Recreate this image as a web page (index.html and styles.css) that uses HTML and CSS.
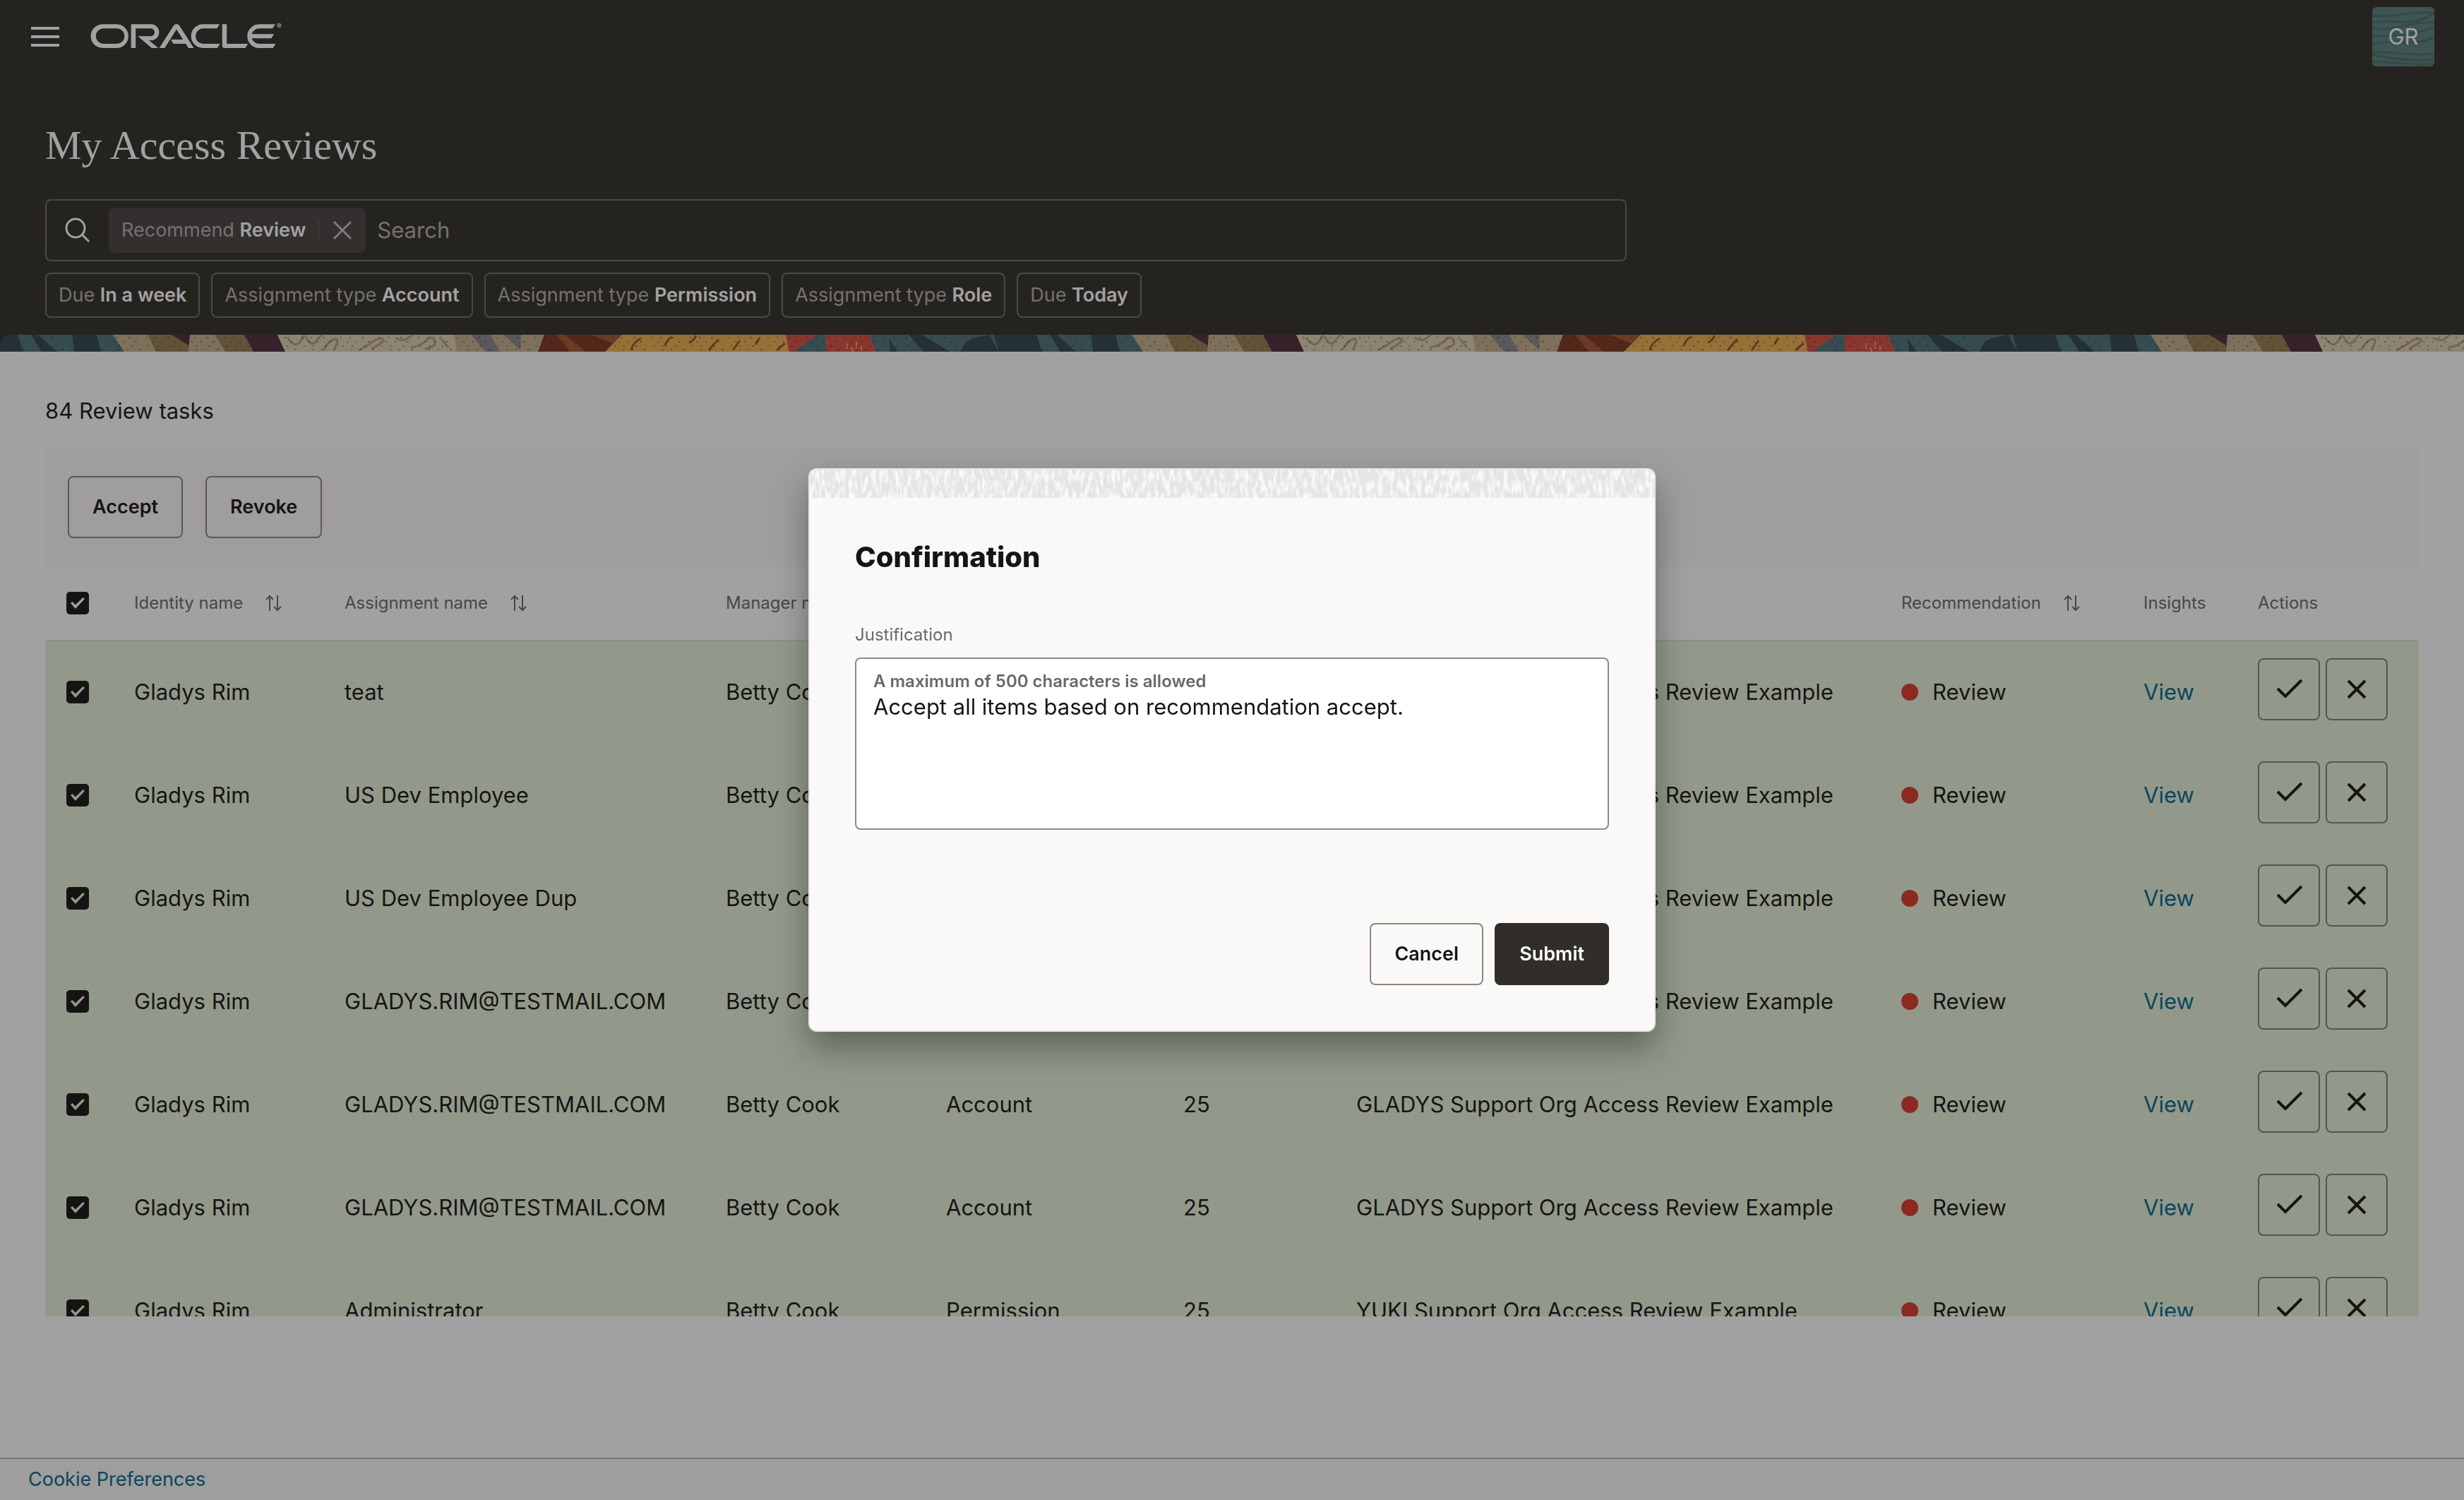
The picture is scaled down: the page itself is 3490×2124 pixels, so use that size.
FILE: index.html
```html
<!DOCTYPE html>
<html lang="en">
<head>
<meta charset="utf-8">
<title>My Access Reviews</title>
<meta name="viewport" content="width=device-width, initial-scale=1">
<link rel="stylesheet" href="styles.css">
</head>
<body>
<svg class="defs" aria-hidden="true">
  <symbol id="i-sort" viewBox="0 0 24 24"><path d="M6 23V2M1 7l5-5 5 5M17 1v21M12 17l5 5 5-5"/></symbol>
  <symbol id="i-check" viewBox="0 0 40 30"><path d="M4 14l11 11L38 2"/></symbol>
  <symbol id="i-x" viewBox="0 0 30 30"><path d="M3 3L27 27M27 3L3 27"/></symbol>
</svg>
<div class="app">
  <header class="hero">
    <div class="topbar">
      <button class="menu" aria-label="Menu"><svg width="40" height="28" viewBox="0 0 40 28"><path d="M0 0h40v4H0zM0 12h40v4H0zM0 24h40v4H0z"/></svg></button>
      <svg class="logo" width="272" height="34" viewBox="0 0 240 30" role="img" aria-label="Oracle">
        <path d="M99.610 19.520h15.240l-8.050-13L92 30h-6.730l18-28.170a4.290 4.290 0 0 1 7-.05L128.320 30h-6.730l-3.170-5.250H103l-3.360-5.230m69.930 5.230V.28h-5.720v26.880a2.760 2.760 0 0 0 .85 2 2.890 2.890 0 0 0 2.080.87h26l3.390-5.250h-26.630M75 20.380A10 10 0 0 0 75 .28H50V30h5.710V5.540h18.940a4.810 4.810 0 0 1 0 9.620H58.540L75.600 30h8.290L72.430 20.380H75M14.880 30h17.270a14.860 14.860 0 0 0 0-29.710H14.880a14.860 14.860 0 1 0 0 29.710m16.880-5.230h-16.500a9.620 9.620 0 0 1 0-19.230h16.500a9.620 9.620 0 1 1 0 19.230M140.250 30h17.630l3.340-5.230h-20.580a9.620 9.620 0 1 1 0-19.230h16.750l3.380-5.250h-20.520a14.860 14.860 0 1 0 0 29.710m69.870-5.230a9.620 9.620 0 0 1-9.260-7h24.420l3.360-5.240h-27.780a9.610 9.610 0 0 1 9.260-7h16.760l3.350-5.250h-20.500a14.860 14.860 0 0 0 0 29.710h17.630l3.350-5.230h-20.600"/>
        <text x="232" y="6" font-size="9">®</text>
      </svg>
      <button class="avatar"><svg viewBox="0 0 88 84" aria-hidden="true"><path d="M0 12c30 4 50-6 88-4M0 22c25-6 60 8 88-14M0 30c30 6 50-10 88-8M0 42c28-4 44 4 88-14M0 52c30-8 60 6 88-10M0 64c34-2 50 6 88 2M0 68c30 4 60 10 88 6M0 78c30-2 50 6 88 2"/></svg><span>GR</span></button>
    </div>
    <div class="hero-body">
      <h1>My Access Reviews</h1>
      <div class="search">
        <svg width="36" height="36" viewBox="0 0 36 36"><circle cx="15" cy="15" r="13"/><path d="M24 24l10 10"/></svg>
        <span class="token"><span>Recommend <b>Review</b></span><button aria-label="Remove filter"><svg width="30" height="30"><use href="#i-x"/></svg></button></span>
        <input type="text" placeholder="Search" aria-label="Search">
      </div>
      <div class="chips">
        <button class="chip">Due <b>In a week</b></button>
        <button class="chip">Assignment type <b>Account</b></button>
        <button class="chip">Assignment type <b>Permission</b></button>
        <button class="chip">Assignment type <b>Role</b></button>
        <button class="chip">Due <b>Today</b></button>
      </div>
    </div>
    <svg class="banner" aria-hidden="true">
      <defs>
        <pattern id="art" width="1443" height="24" patternUnits="userSpaceOnUse">
          <path fill="#4b727b" d="M0 0h1443v24H0z"/>
          <path fill="#2f4551" d="M0 0h25l8 24H0zM44 0h10l27 24H59zM102 0h35l6 24h-38zM1408 0h35v24h-29zM1287 0h19l40 24h-38zM1259 5l12 19h-10zM1380 4l22-4 12 24h-54l8-14z"/>
          <path fill="#c4af8c" d="M160 0h240l20 24H176zM641 0h130l-8 24H647z"/>
          <path fill="#957c51" d="M209 0h60v24h-48zM304 0h42l14 24h-41z"/>
          <path fill="#4e2b39" d="M243 0h27l-1 16zM346 0h47l11 24h-45z"/>
          <path fill="#c4af8c" d="M269 0h35l15 24h-52z"/>
          <path fill="#ddd1b2" d="M393 0h250l4 24H404z"/>
          <path fill="#89858b" d="M667 0h28l13 24h-20zM714 0h24l-1 22z"/>
          <path fill="#7b3620" d="M771 0h110l-24 24h-95z"/>
          <path fill="#a35632" d="M788 0h12l29 24h-22zM836 0h45l-13 12z"/>
          <path fill="#eaaf50" d="M881 0h232l5 24H857z"/>
          <path fill="#d64e41" d="M1113 0h45l-33 24h-7zM1170 0h61l10 24h-71z"/>
          <g fill="none" stroke-width="3">
            <path stroke="#b39c76" d="M407 4q10 14 16 8t8-12M433 2q8 16 14 8t10-10M458 22q8-14 16-16t0 14M508 22q12-6 20-12t14-4-16 14M560 4q10 6 16 2t8-6M582 18q14-2 22-10t12 0-14 12M625 6l10 12"/>
            <path stroke="#9c4f27" d="M908 5q-12 6-14 17M952 3q-8 4-10 13M986 1q-4 8-10 10M1018 6q-8 8-14 16M1048 8l-10 14M1076 4l-6 10M1112 12l-12 10"/>
            <path stroke="#eaaf50" stroke-width="2" d="M1200 12v8M1213 10v10M1220 16v6M1206 18l2 6"/>
          </g>
          <path fill="none" stroke="#161513" stroke-opacity=".35" stroke-width="2" stroke-dasharray="2 15 3 22 2 11" d="M0 4h1443M9 10h1434M3 16h1440M15 21h1428"/>
        </pattern>
      </defs>
      <rect width="100%" height="24" fill="url(#art)"/>
    </svg>
  </header>

  <main>
    <h2>84 Review tasks</h2>
    <div class="toolbar"><button class="btn">Accept</button><button class="btn">Revoke</button></div>
    <div class="scroller">
      <table>
        <colgroup><col class="c-check"><col class="c-identity"><col class="c-assignment"><col class="c-manager"><col class="c-type"><col class="c-count"><col><col class="c-rec"><col class="c-insights"><col class="c-actions"></colgroup>
        <thead>
          <tr>
            <th><input type="checkbox" checked aria-label="Select all"></th>
            <th><span class="sort">Identity name<svg><use href="#i-sort"/></svg></span></th>
            <th><span class="sort">Assignment name<svg><use href="#i-sort"/></svg></span></th>
            <th>Manager name</th><th>Type</th><th>Days</th><th>Campaign</th>
            <th><span class="sort">Recommendation<svg><use href="#i-sort"/></svg></span></th>
            <th>Insights</th><th>Actions</th>
          </tr>
        </thead>
        <tbody>
          <tr><td><input type="checkbox" checked aria-label="Select row"></td><td>Gladys Rim</td><td>teat</td><td>Betty Cook</td><td>Account</td><td>25</td><td>GLADYS Support Org Access Review Example</td><td><span class="rec">Review</span></td><td><a href="#">View</a></td><td class="acts"><div><button aria-label="Accept"><svg class="ok"><use href="#i-check"/></svg></button><button aria-label="Revoke"><svg class="no"><use href="#i-x"/></svg></button></div></td></tr>
          <tr><td><input type="checkbox" checked aria-label="Select row"></td><td>Gladys Rim</td><td>US Dev Employee</td><td>Betty Cook</td><td>Account</td><td>25</td><td>GLADYS Support Org Access Review Example</td><td><span class="rec">Review</span></td><td><a href="#">View</a></td><td class="acts"><div><button aria-label="Accept"><svg class="ok"><use href="#i-check"/></svg></button><button aria-label="Revoke"><svg class="no"><use href="#i-x"/></svg></button></div></td></tr>
          <tr><td><input type="checkbox" checked aria-label="Select row"></td><td>Gladys Rim</td><td>US Dev Employee Dup</td><td>Betty Cook</td><td>Account</td><td>25</td><td>GLADYS Support Org Access Review Example</td><td><span class="rec">Review</span></td><td><a href="#">View</a></td><td class="acts"><div><button aria-label="Accept"><svg class="ok"><use href="#i-check"/></svg></button><button aria-label="Revoke"><svg class="no"><use href="#i-x"/></svg></button></div></td></tr>
          <tr><td><input type="checkbox" checked aria-label="Select row"></td><td>Gladys Rim</td><td>GLADYS.RIM@TESTMAIL.COM</td><td>Betty Cook</td><td>Account</td><td>25</td><td>GLADYS Support Org Access Review Example</td><td><span class="rec">Review</span></td><td><a href="#">View</a></td><td class="acts"><div><button aria-label="Accept"><svg class="ok"><use href="#i-check"/></svg></button><button aria-label="Revoke"><svg class="no"><use href="#i-x"/></svg></button></div></td></tr>
          <tr><td><input type="checkbox" checked aria-label="Select row"></td><td>Gladys Rim</td><td>GLADYS.RIM@TESTMAIL.COM</td><td>Betty Cook</td><td>Account</td><td>25</td><td>GLADYS Support Org Access Review Example</td><td><span class="rec">Review</span></td><td><a href="#">View</a></td><td class="acts"><div><button aria-label="Accept"><svg class="ok"><use href="#i-check"/></svg></button><button aria-label="Revoke"><svg class="no"><use href="#i-x"/></svg></button></div></td></tr>
          <tr><td><input type="checkbox" checked aria-label="Select row"></td><td>Gladys Rim</td><td>GLADYS.RIM@TESTMAIL.COM</td><td>Betty Cook</td><td>Account</td><td>25</td><td>GLADYS Support Org Access Review Example</td><td><span class="rec">Review</span></td><td><a href="#">View</a></td><td class="acts"><div><button aria-label="Accept"><svg class="ok"><use href="#i-check"/></svg></button><button aria-label="Revoke"><svg class="no"><use href="#i-x"/></svg></button></div></td></tr>
          <tr><td><input type="checkbox" checked aria-label="Select row"></td><td>Gladys Rim</td><td>Administrator</td><td>Betty Cook</td><td>Permission</td><td>25</td><td>YUKI Support Org Access Review Example</td><td><span class="rec">Review</span></td><td><a href="#">View</a></td><td class="acts"><div><button aria-label="Accept"><svg class="ok"><use href="#i-check"/></svg></button><button aria-label="Revoke"><svg class="no"><use href="#i-x"/></svg></button></div></td></tr>
        </tbody>
      </table>
    </div>
  </main>
  <footer><a href="#">Cookie Preferences</a></footer>
</div>

<div class="scrim">
  <section class="dialog" role="dialog" aria-modal="true" aria-labelledby="dlg-title">
    <svg class="strip" aria-hidden="true">
      <filter id="paper" x="0" y="0" width="100%" height="100%" color-interpolation-filters="sRGB">
        <feTurbulence type="fractalNoise" baseFrequency="0.18 0.06" numOctaves="2" seed="7"/>
        <feColorMatrix values="0 0 0 0 .98  0 0 0 0 .975  0 0 0 0 .97  4 0 0 0 -1.7"/>
      </filter>
      <rect width="100%" height="40" fill="#e6e5e3"/>
      <rect width="100%" height="40" filter="url(#paper)"/>
    </svg>
    <div class="dialog-body">
      <h2 id="dlg-title">Confirmation</h2>
      <label for="why">Justification</label>
      <div class="field">
        <span id="hint">A maximum of 500 characters is allowed</span>
        <textarea id="why" aria-describedby="hint">Accept all items based on recommendation accept.</textarea>
      </div>
      <div class="dialog-foot"><button class="btn">Cancel</button><button class="btn primary">Submit</button></div>
    </div>
  </section>
</div>
</body>
</html>
```
FILE: styles.css
```css
* { box-sizing: border-box; }
body {
  margin: 0;
  font-family: Inter, "Liberation Sans", sans-serif;
  font-size: 31px;
  line-height: 40px;
  color: #161513;
  background: #fff;
}
button, input, textarea { font: inherit; color: inherit; }
button { background: none; border: 0; padding: 0; cursor: pointer; }
a { color: #00688c; text-decoration: none; }
h1, h2 { margin: 0; font-weight: 400; }
h2 { font-size: 31px; }
b { font-weight: 600; }
svg { display: block; }
.defs { position: absolute; width: 0; height: 0; }

.app { height: 100vh; display: flex; flex-direction: column; }

/* header */
.hero { background: #302d29; color: #fff; }
.topbar { height: 104px; display: flex; align-items: center; padding: 0 42px 0 44px; }
.menu svg, .logo { fill: #fff; }
.logo { margin: 0 auto 2px 45px; overflow: visible; }
.avatar {
  display: grid;
  place-items: center;
  width: 88px;
  height: 84px;
  border-radius: 6px;
  overflow: hidden;
  background: #57807d;
}
.avatar > * { grid-area: 1 / 1; }
.avatar svg { width: 88px; height: 84px; fill: none; stroke: #4a6d66; stroke-width: 3; }
.hero-body { padding: 62px 64px 24px; }
h1 {
  font-family: Georgia, "Liberation Serif", serif;
  font-size: 58px;
  line-height: 80px;
  margin-bottom: 36px;
}
.search {
  display: flex;
  align-items: center;
  max-width: 2240px;
  height: 88px;
  border: 2px solid #6f6c6a;
  border-radius: 8px;
  padding: 0 26px;
}
.search > svg { fill: none; stroke: #fff; stroke-width: 3; }
.token {
  display: flex;
  align-items: center;
  height: 64px;
  margin: 0 16px 0 26px;
  padding: 0 18px;
  border-radius: 8px;
  background: #454240;
  font-size: 27px;
  color: #b3b0ad;
}
.token b, .chip b { color: #fff; }
.token button { margin-left: 17px; padding-left: 18px; border-left: 2px solid #55524f; }
.token svg { fill: none; stroke: #c4c2c0; stroke-width: 3; }
.search input { flex: 1; min-width: 0; border: 0; padding: 0; background: none; }
.search input::placeholder { color: #b3b0ad; opacity: 1; }
.chips { display: flex; flex-wrap: wrap; gap: 16px; margin-top: 16px; }
.chip {
  height: 64px;
  padding: 0 17px;
  border: 2px solid #6f6c6a;
  border-radius: 8px;
  font-size: 27px;
  color: #b3b0ad;
}
.banner { width: 100%; height: 24px; border-top-left-radius: 16px; }

/* content */
main {
  flex: 1;
  min-height: 0;
  display: flex;
  flex-direction: column;
  padding: 64px 64px 200px;
}
.toolbar {
  display: flex;
  gap: 32px;
  margin-top: 32px;
  padding: 40px 32px;
  background: #fbf9f8;
}
.btn {
  height: 88px;
  padding: 0 33px;
  border: 2px solid #8b8580;
  border-radius: 8px;
  font-size: 27px;
  font-weight: 600;
}
.btn.primary { background: #312d2a; border-color: #312d2a; color: #fff; }
.scroller { flex: 1; min-height: 0; overflow: hidden; }
table { width: 100%; table-layout: fixed; border-spacing: 0; }
.c-check { width: 96px; }
.c-identity { width: 298px; }
.c-assignment { width: 540px; }
.c-manager { width: 312px; }
.c-type { width: 336px; }
.c-count { width: 245px; }
.c-rec { width: 343px; }
.c-insights { width: 162px; }
.c-actions { width: 258px; }
th, td { text-align: left; padding: 0 0 0 30px; white-space: nowrap; }
th {
  height: 106px;
  border-bottom: 2px solid #e2e0de;
  font-size: 24px;
  font-weight: 400;
  color: #6a6967;
}
td { height: 146px; padding-bottom: 2px; background: #e4f2da; }
.sort { display: flex; align-items: center; }
.sort svg { width: 24px; height: 24px; margin-left: 32px; fill: none; stroke: #6a6967; stroke-width: 2; }
input[type="checkbox"] {
  appearance: none;
  display: grid;
  place-items: center;
  width: 32px;
  height: 32px;
  margin: 0;
  border-radius: 5px;
  background: #161513;
  color: #fff;
}
td input[type="checkbox"] { color: #e4f2da; }
input[type="checkbox"]::before {
  content: "";
  width: 20px;
  height: 16px;
  background: currentColor;
  clip-path: polygon(0 50%, 12% 38%, 34% 66%, 88% 0, 100% 12%, 34% 100%);
}
.rec { display: flex; align-items: center; gap: 20px; }
.rec::before { content: ""; width: 24px; height: 24px; border-radius: 50%; background: #d9392a; }
td.acts { padding-top: 24px; padding-bottom: 34px; }
.acts div { display: flex; gap: 8px; }
.acts button {
  display: grid;
  place-items: center;
  width: 88px;
  height: 88px;
  border: 2px solid #7c8275;
  border-radius: 8px;
}
.acts svg { fill: none; stroke: #161513; stroke-width: 4; }
.ok { width: 40px; height: 30px; }
.no { width: 30px; height: 30px; }

footer {
  height: 60px;
  flex: none;
  display: flex;
  align-items: center;
  padding: 0 40px;
  border-top: 2px solid #bbb5ab;
  background: #fbf9f8;
  font-size: 27px;
}

/* dialog */
.scrim {
  position: fixed;
  inset: 0;
  display: flex;
  align-items: center;
  justify-content: center;
  background: rgba(22, 21, 19, .4);
}
.dialog {
  width: 1200px;
  max-width: 94vw;
  overflow: hidden;
  border: 2px solid #e8e6e3;
  border-radius: 12px;
  background: #fbf9f8;
  box-shadow: 0 24px 48px rgba(0, 0, 0, .35);
}
.strip { width: 100%; height: 40px; }
.dialog-body { padding: 56px 64px 64px; }
.dialog h2 { font-size: 40px; line-height: 56px; font-weight: 800; }
.dialog label { display: block; margin-top: 66px; font-size: 24px; line-height: 32px; color: #6a6967; }
.field {
  display: flex;
  flex-direction: column;
  height: 244px;
  margin-top: 16px;
  padding: 16px 24px;
  border: 2px solid #8b8a88;
  border-radius: 8px;
  background: #fff;
}
.field span { font-size: 24px; line-height: 32px; font-weight: 600; color: #6a6967; }
.field textarea { flex: 1; border: 0; padding: 0; outline: 0; resize: none; background: none; line-height: 40px; }
.dialog-foot { display: flex; justify-content: flex-end; gap: 16px; margin-top: 132px; }
```
